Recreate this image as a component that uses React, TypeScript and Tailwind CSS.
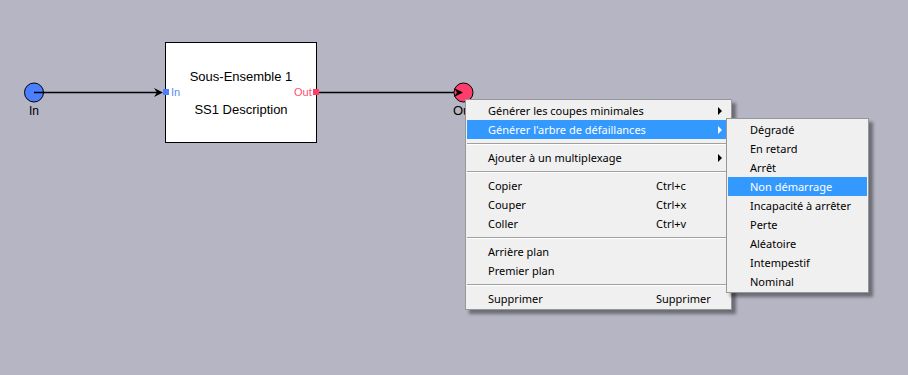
import React from "react";

const menuFont = { fontFamily: '"Noto Sans", "Liberation Sans", sans-serif' };

function Arrow({ white }: { white?: boolean }) {
  return (
    <svg width="5" height="8" viewBox="0 0 5 8" className="absolute right-[7px] top-[6px]">
      <polygon points="0,0 4,4 0,8" fill={white ? "#ffffff" : "#000000"} />
    </svg>
  );
}

function Row({
  label,
  shortcut,
  active,
  sub,
}: {
  label: string;
  shortcut?: string;
  active?: boolean;
  sub?: boolean;
}) {
  return (
    <div
      className={`relative flex h-[19px] items-center pl-[21px] pt-px ${
        active ? "bg-[#3399ff] text-white" : "text-black"
      }`}
    >
      <span className="w-[168px] whitespace-nowrap">{label}</span>
      {shortcut && <span className="whitespace-nowrap">{shortcut}</span>}
      {sub && <Arrow white={active} />}
    </div>
  );
}

function Sep() {
  return (
    <div className="flex h-[9px] flex-col justify-center">
      <div className="h-px bg-[#a0a0a0]" />
      <div className="h-px bg-white" />
    </div>
  );
}

function SubRow({ label, active }: { label: string; active?: boolean }) {
  return (
    <div
      className={`flex h-[19px] items-center pl-[22px] pt-px whitespace-nowrap ${
        active ? "bg-[#3399ff] text-white" : "text-black"
      }`}
    >
      {label}
    </div>
  );
}

export default function App() {
  return (
    <div
      className="relative h-[375px] w-[908px] overflow-hidden bg-[#b5b5c3]"
      style={{ fontFamily: '"Liberation Sans", Arial, sans-serif' }}
    >
      {/* connections and nodes drawing */}
      <svg className="absolute left-0 top-0" width="908" height="375">
        <line x1="34" y1="92.5" x2="158" y2="92.5" stroke="#000" strokeWidth="1.5" />
        <circle cx="34" cy="92.5" r="9.5" fill="#4a80ff" stroke="#000" strokeWidth="1" />
        <line x1="34" y1="92.5" x2="44" y2="92.5" stroke="#000" strokeWidth="1.5" />
        <polygon points="154,88 163,92.5 154,97 157,92.5" fill="#000" />
        <line x1="319" y1="92.5" x2="458" y2="92.5" stroke="#000" strokeWidth="1.5" />
        <circle cx="463.5" cy="92.5" r="9.5" fill="#ff3d6a" stroke="#000" strokeWidth="1" />
        <polygon points="454,88 463,92.5 454,97 457,92.5" fill="#000" />
      </svg>

      <div className="absolute left-[29px] top-[104px] text-[12px] leading-[14px] text-black">In</div>
      <div className="absolute left-[453px] top-[104px] text-[13px] leading-[14px] text-black">Out</div>

      {/* block */}
      <div className="absolute left-[165px] top-[42px] flex h-[101px] w-[152px] flex-col items-center border border-black bg-white text-[13px] text-black">
        <div className="mt-[26px] leading-[16px]">Sous-Ensemble 1</div>
        <div className="mt-[17px] leading-[16px]">SS1 Description</div>
      </div>
      <div className="absolute left-[163px] top-[89px] h-[6px] w-[6px] bg-[#4a80ff]" />
      <div className="absolute left-[171px] top-[86px] text-[11px] leading-[13px] text-[#5a8cff]">In</div>
      <div className="absolute left-[313px] top-[89px] h-[6px] w-[6px] bg-[#ff3d64]" />
      <div className="absolute left-[294px] top-[86px] text-[11px] leading-[13px] text-[#ff4f72]">Out</div>

      {/* context menu */}
      <div
        className="absolute left-[465px] top-[99px] w-[267px] border border-[#979797] bg-[#f0f0f0] p-px text-[11px] shadow-[4px_4px_3px_rgba(0,0,0,0.4)]"
        style={menuFont}
      >
        <Row label="Générer les coupes minimales" sub />
        <Row label="Générer l'arbre de défaillances" sub active />
        <Sep />
        <Row label="Ajouter à un multiplexage" sub />
        <Sep />
        <Row label="Copier" shortcut="Ctrl+c" />
        <Row label="Couper" shortcut="Ctrl+x" />
        <Row label="Coller" shortcut="Ctrl+v" />
        <Sep />
        <Row label="Arrière plan" />
        <Row label="Premier plan" />
        <Sep />
        <Row label="Supprimer" shortcut="Supprimer" />
      </div>

      {/* submenu */}
      <div
        className="absolute left-[726px] top-[118px] w-[143px] border border-[#979797] bg-[#f0f0f0] p-px text-[11px] shadow-[4px_4px_3px_rgba(0,0,0,0.4)]"
        style={menuFont}
      >
        <SubRow label="Dégradé" />
        <SubRow label="En retard" />
        <SubRow label="Arrêt" />
        <SubRow label="Non démarrage" active />
        <SubRow label="Incapacité à arrêter" />
        <SubRow label="Perte" />
        <SubRow label="Aléatoire" />
        <SubRow label="Intempestif" />
        <SubRow label="Nominal" />
      </div>
    </div>
  );
}
